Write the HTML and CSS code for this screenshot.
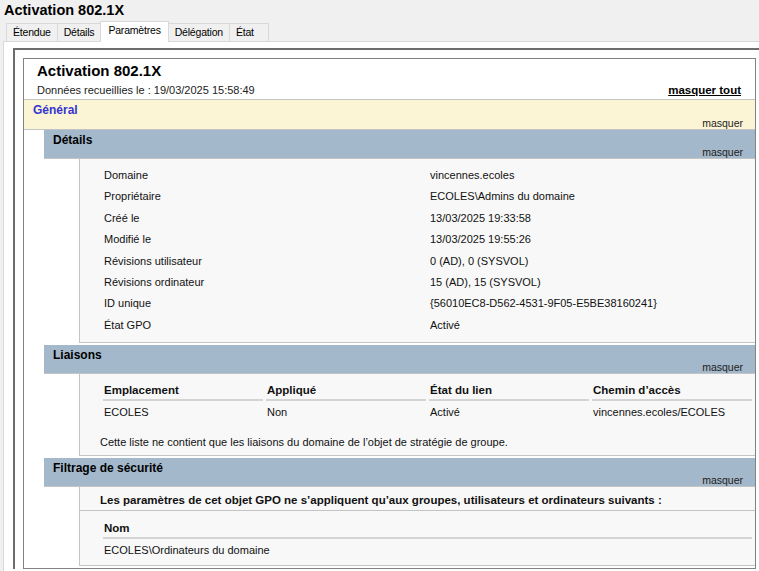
FILE: index.html
```html
<!DOCTYPE html>
<html lang="fr">
<head>
    <meta charset="UTF-8">
    <title>Activation 802.1X</title>
    <link rel="stylesheet" href="styles.css">
</head>
<body>
    <div class="window-title">Activation 802.1X</div>

    <div class="tabs">
        <div class="tab">Étendue</div>
        <div class="tab">Détails</div>
        <div class="tab active">Paramètres</div>
        <div class="tab">Délégation</div>
        <div class="tab">État</div>
    </div>

    <div class="tab-panel">
        <div class="frame">
            <div class="report">
                <div class="report-head">
                    <div class="report-title">Activation 802.1X</div>
                    <div class="report-meta">
                        <span>Données recueillies le : 19/03/2025 15:58:49</span>
                        <a class="toggle-all">masquer tout</a>
                    </div>
                </div>

                <div class="category">
                    <div class="category-title">Général</div>
                    <div class="hide">masquer</div>
                </div>

                <div class="section">
                    <div class="section-head">
                        <div class="section-title">Détails</div>
                        <div class="hide">masquer</div>
                    </div>
                    <div class="section-body details">
                        <span>Domaine</span><span>vincennes.ecoles</span>
                        <span>Propriétaire</span><span>ECOLES\Admins du domaine</span>
                        <span>Créé le</span><span>13/03/2025 19:33:58</span>
                        <span>Modifié le</span><span>13/03/2025 19:55:26</span>
                        <span>Révisions utilisateur</span><span>0 (AD), 0 (SYSVOL)</span>
                        <span>Révisions ordinateur</span><span>15 (AD), 15 (SYSVOL)</span>
                        <span>ID unique</span><span>{56010EC8-D562-4531-9F05-E5BE38160241}</span>
                        <span>État GPO</span><span>Activé</span>
                    </div>
                </div>

                <div class="section">
                    <div class="section-head">
                        <div class="section-title">Liaisons</div>
                        <div class="hide">masquer</div>
                    </div>
                    <div class="section-body links">
                        <div class="grid cols-4">
                            <div class="th">Emplacement</div>
                            <div class="th">Appliqué</div>
                            <div class="th">État du lien</div>
                            <div class="th">Chemin d’accès</div>
                            <div class="td">ECOLES</div>
                            <div class="td">Non</div>
                            <div class="td">Activé</div>
                            <div class="td">vincennes.ecoles/ECOLES</div>
                        </div>
                        <div class="note">Cette liste ne contient que les liaisons du domaine de l’objet de stratégie de groupe.</div>
                    </div>
                </div>

                <div class="section">
                    <div class="section-head">
                        <div class="section-title">Filtrage de sécurité</div>
                        <div class="hide">masquer</div>
                    </div>
                    <div class="section-body filter">
                        <div class="intro">Les paramètres de cet objet GPO ne s’appliquent qu’aux groupes, utilisateurs et ordinateurs suivants :</div>
                        <div class="grid cols-1">
                            <div class="th">Nom</div>
                            <div class="td">ECOLES\Ordinateurs du domaine</div>
                        </div>
                    </div>
                </div>
            </div>
        </div>
    </div>
</body>
</html>
```

FILE: styles.css
```css
body {
    margin: 0;
    background-color: #f0f0f0;
    font-family: "Liberation Sans", Arial, sans-serif;
    color: #000;
    overflow: hidden;
}

.window-title {
    font-size: 14.5px;
    font-weight: bold;
    line-height: 20px;
    padding-left: 4px;
}

/* tabs */

.tabs {
    display: flex;
    align-items: flex-end;
    height: 20px;
    margin-top: 1px;
    padding-left: 6px;
}

.tab {
    box-sizing: border-box;
    min-width: 40px;
    height: 18px;
    line-height: 17px;
    padding: 0 6px;
    font-size: 10.5px;
    letter-spacing: -0.2px;
    border: 1px solid #d9d9d9;
    border-bottom: none;
    margin-right: -1px;
}

.tab.active {
    position: relative;
    z-index: 1;
    height: 21px;
    line-height: 16px;
    margin-bottom: -1px;
    padding: 0 7px;
    background-color: white;
}

.tab-panel {
    background-color: white;
    border-top: 1px solid #d9d9d9;
    border-left: 1px solid #d9d9d9;
    margin-left: 3px;
    padding: 6px 0 0 9px;
    height: 600px;
}

.frame {
    border-top: 2px solid #6d6d6d;
    border-left: 2px solid #6d6d6d;
    padding: 8px 0 0 8px;
}

.report {
    border: 1px solid #828282;
    margin-right: 3px;
    font-size: 11px;
}

/* report header */

.report-head {
    padding: 3px 14px 2px 13px;
}

.report-title {
    font-size: 15px;
    font-weight: bold;
    line-height: 18px;
}

.report-meta {
    display: flex;
    justify-content: space-between;
    margin-top: 3px;
    line-height: 14px;
    color: #222;
}

.toggle-all {
    font-size: 11.5px;
    font-weight: bold;
    text-decoration: underline;
    color: #000;
}

.hide {
    align-self: flex-end;
    font-size: 10.5px;
    line-height: 11px;
    color: #222;
}

.category {
    display: flex;
    flex-direction: column;
    justify-content: space-between;
    height: 26px;
    padding: 3px 12px 0 9px;
    background-color: #fcf5d5;
    border-top: 1px solid #c4c4c4;
    border-bottom: 1px solid #c4c4c4;
}

.category-title {
    font-size: 12px;
    line-height: 14px;
    color: #3535d2;
    font-weight: bold;
}

/* sections */

.section {
    margin-left: 20px;
    margin-bottom: 2px;
}

.section-head {
    display: flex;
    flex-direction: column;
    justify-content: space-between;
    height: 25px;
    padding: 3px 12px 0 9px;
    background-color: #a3b8cb;
    border-bottom: 1px solid #c4c4c4;
}

.section-title {
    font-size: 12px;
    font-weight: bold;
    line-height: 14px;
}

.section-body {
    margin-left: 35px;
    background-color: #f8f8f8;
    border-left: 1px solid #c4c4c4;
    border-bottom: 1px solid #c4c4c4;
    padding: 7px 0 2px 20px;
    color: #111;
}

.details {
    display: grid;
    grid-template-columns: 326px 1fr;
    padding: 6px 0 6px 24px;
    line-height: 21.4px;
}

.links {
    padding-bottom: 3px;
}

.grid {
    display: grid;
    column-gap: 3px;
    margin: 0 3px;
}

.cols-4 {
    grid-template-columns: repeat(4, 1fr);
}

.cols-1 {
    grid-template-columns: 1fr;
}

.th {
    font-size: 11.5px;
    font-weight: bold;
    line-height: 18px;
    padding-left: 1px;
    border-bottom: 2px solid #d4d4d4;
}

.td {
    line-height: 22px;
    padding-left: 1px;
}

.note {
    margin-top: 9px;
    line-height: 20px;
}

.filter {
    padding: 3px 0 4px 0;
}

.intro {
    font-size: 11.5px;
    font-weight: bold;
    line-height: 20px;
    padding-left: 20px;
    border-bottom: 1px solid #c4c4c4;
    margin-bottom: 8px;
}

.filter .grid {
    margin-left: 23px;
}
```
